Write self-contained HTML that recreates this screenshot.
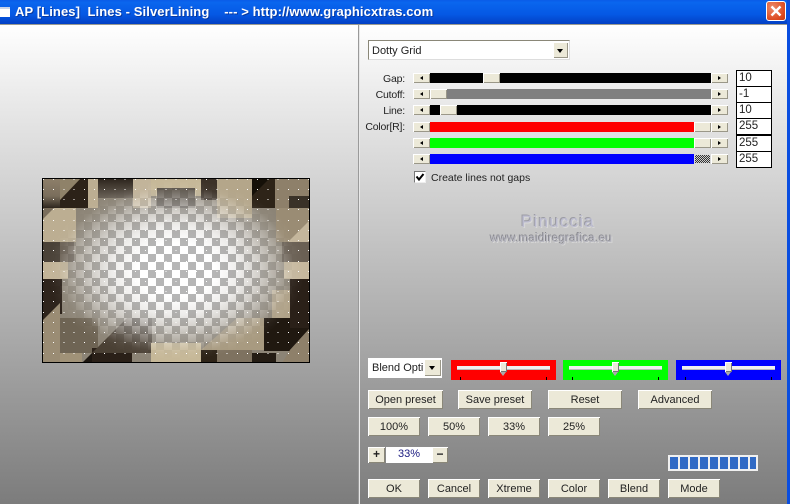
<!DOCTYPE html>
<html><head><meta charset="utf-8"><style>
html,body{margin:0;padding:0}
body{width:790px;height:504px;overflow:hidden;position:relative;font-family:"Liberation Sans",sans-serif;font-size:11px;color:#000}
div,span{position:absolute;box-sizing:border-box}
#bg{left:0;top:24px;width:787px;height:480px;background:linear-gradient(#fff 0,#eee 60px,#c8c8c8 200px,#a2a2a2 340px,#7c7c7c 480px)}
#title{left:0;top:0;width:790px;height:24px;background:linear-gradient(#0a5ce8 0,#0a66ee 10%,#0558e4 60%,#0340c4 100%)}
.b{background:#ece9d8;box-shadow:inset 1px 1px 0 #fff,inset -1px -1px 0 #8a8778;text-align:center;font-size:11px;line-height:20px;color:#222}
.s{background:#ece9d8;box-shadow:inset 1px 1px 0 #fff,inset -1px -1px 0 #9a9788}
.t{height:10px;left:430px;width:281px}
.ar{width:17px;height:10px;font-size:0}
.ar i{position:absolute;top:3px;left:7px;width:0;height:0;border:2px solid transparent;display:block}
.l i{border-right:3px solid #000;border-left:0}
.r i{border-left:3px solid #000;border-right:0}
.lb{right:385px;text-align:right;font-size:10.5px;letter-spacing:-.2px;color:#222;line-height:14px;white-space:nowrap}
.in{left:736px;width:36px;height:17px;background:#fff;border:1px solid #000;font-size:11.5px;line-height:14px;padding-left:2px;color:#222}
.pn{top:360px;height:20px;width:105px}
.tr{top:366px;height:3px;background:#f0f0f0;box-shadow:0 1px 0 #bbb}
.th{top:362px;width:7px;height:10px;background:#ece9d8;box-shadow:inset 1px 1px 0 #fff,inset -1px -1px 0 #777}
.th2{top:372px;width:0;height:0;border-left:3.5px solid transparent;border-right:3.5px solid transparent;border-top:4px solid #aaa}
.tk{top:377px;width:1px;height:3px;background:#000}
</style></head><body>
<div id="bg"></div>
<div id="title"></div>
<div style="left:0;top:7px;width:10px;height:10px;background:#fff;border-top:2px solid #c8d4e8"></div>
<div style="left:15px;top:3px;color:#fff;font-weight:bold;font-size:13px;letter-spacing:.1px;line-height:18px;white-space:pre;text-shadow:1px 1px 0 #0a3aa0">AP [Lines]  Lines - SilverLining    --- &gt; http://www.graphicxtras.com</div>
<div style="left:766px;top:1px;width:20px;height:20px;border-radius:3px;border:1px solid #fff;background:radial-gradient(circle at 30% 30%,#ec8a6a,#dd4a20 70%,#c83a10)"></div>
<svg style="position:absolute;left:766px;top:1px" width="20" height="20"><path d="M5.5 5.5L14.5 14.5M14.5 5.5L5.5 14.5" stroke="#fff" stroke-width="2.4"/></svg>
<div style="left:787px;top:0;width:3px;height:504px;background:#0a4ee0"></div>
<div style="left:0;top:24px;width:787px;height:1px;background:#9a9a90"></div>
<div style="left:358px;top:25px;width:1px;height:479px;background:#9a9a9a"></div>
<div style="left:359px;top:25px;width:1px;height:479px;background:#e8e8e8"></div>

<svg style="position:absolute;left:42px;top:178px" width="268" height="185" viewBox="0 0 268 185">
<defs>
<pattern id="ck" width="16" height="16" patternUnits="userSpaceOnUse" x="2" y="4"><rect width="16" height="16" fill="#fff"/><rect width="8" height="8" fill="#b6b6b6"/><rect x="8" y="8" width="8" height="8" fill="#b6b6b6"/></pattern>
<radialGradient id="rg" cx="134" cy="92" r="1" gradientUnits="userSpaceOnUse" gradientTransform="translate(134 92) scale(128 90) translate(-134 -92)">
<stop offset="0" stop-color="#fff" stop-opacity="0"/><stop offset=".3" stop-color="#fff" stop-opacity="0"/><stop offset=".5" stop-color="#fff" stop-opacity=".15"/><stop offset=".65" stop-color="#fff" stop-opacity=".38"/><stop offset=".8" stop-color="#fff" stop-opacity=".68"/><stop offset=".92" stop-color="#fff" stop-opacity=".95"/><stop offset="1" stop-color="#fff" stop-opacity="1"/></radialGradient>
<mask id="mk" maskUnits="userSpaceOnUse" x="0" y="0" width="268" height="185"><rect width="268" height="185" fill="url(#rg)"/></mask>
<linearGradient id="g1" x1="0" y1="0" x2="0" y2="1"><stop offset="0" stop-color="#8e806a"/><stop offset=".6" stop-color="#7a6e5c"/><stop offset="1" stop-color="#2e261e"/></linearGradient>
<linearGradient id="g2" x1="0" y1="0" x2="0" y2="1"><stop offset="0" stop-color="#2a221a"/><stop offset="1" stop-color="#6a6258"/></linearGradient>
</defs>
<rect width="268" height="185" fill="url(#ck)"/>
<g mask="url(#mk)">
<rect width="268" height="185" fill="#8c8476"/>
<rect x="0" y="0" width="18" height="30" fill="url(#g1)"/>
<rect x="18" y="0" width="28" height="30" fill="#2c2218"/>
<path d="M18 0H39L18 22Z" fill="#8f8269"/>
<rect x="46" y="0" width="10" height="30" fill="#bcae92"/>
<rect x="56" y="0" width="35" height="20" fill="url(#g2)"/>
<rect x="91" y="0" width="18" height="30" fill="#c2b49a"/>
<rect x="109" y="0" width="50" height="18" fill="#c6b898"/>
<rect x="115" y="10" width="38" height="20" fill="#5a5248"/>
<rect x="159" y="0" width="16" height="22" fill="#3c3228"/>
<rect x="175" y="0" width="35" height="40" fill="#b4a68a"/>
<rect x="210" y="0" width="23" height="30" fill="#2e2418"/>
<path d="M210 18L228 0H210Z" fill="#151008"/>
<rect x="233" y="0" width="35" height="30" fill="#8e806a"/>
<rect x="247" y="18" width="21" height="12" fill="#3a3228"/>
<rect x="0" y="30" width="34" height="34" fill="#bcae92"/>
<path d="M0 42L12 30H0Z" fill="#7a6e5c"/>
<rect x="234" y="30" width="34" height="34" fill="#9a8c74"/>
<path d="M268 42V64H246Z" fill="#c4b69c"/>
<rect x="0" y="64" width="18" height="20" fill="#4a4238"/>
<rect x="18" y="64" width="14" height="20" fill="#6a6054"/>
<rect x="240" y="64" width="28" height="20" fill="#6a6054"/>
<rect x="0" y="84" width="26" height="17" fill="#c2b498"/>
<rect x="242" y="84" width="26" height="17" fill="#c6b89e"/>
<rect x="0" y="101" width="20" height="35" fill="#2e241c"/>
<path d="M0 148L20 128V136H0Z" fill="#2e241c"/>
<rect x="248" y="101" width="20" height="50" fill="#2a2018"/>
<rect x="230" y="112" width="18" height="28" fill="#b0a288"/>
<path d="M0 143L18 125V185H0Z" fill="#9a8c74"/>
<rect x="18" y="140" width="38" height="35" fill="#6e6454"/>
<rect x="18" y="175" width="22" height="10" fill="#a09278"/>
<path d="M40 185L50 175V185Z" fill="#1c1610"/>
<rect x="50" y="170" width="40" height="15" fill="#2a2018"/>
<path d="M50 175L85 140H110V175Z" fill="#4a4034"/>
<rect x="109" y="165" width="50" height="20" fill="#c6b898"/>
<rect x="159" y="172" width="16" height="13" fill="#2e2418"/>
<path d="M159 172L195 140H222V172Z" fill="#a89a80"/>
<rect x="175" y="172" width="35" height="13" fill="#7e7260"/>
<rect x="210" y="175" width="24" height="10" fill="#241c14"/>
<rect x="222" y="140" width="26" height="33" fill="#201810"/>
<path d="M248 150H268L248 172Z" fill="#201810"/>
<path d="M268 150V185H240L248 172Z" fill="#8e806a"/>
</g>
<path shape-rendering="crispEdges" fill="none" stroke="#fff" stroke-width="1" stroke-dasharray="1 9.2" d="M1 1.5H268M1 11.5H268M1 21.5H268M1 31.5H268M1 42.5H268M1 52.5H268M1 62.5H268M1 72.5H268M1 83.5H268M1 93.5H268M1 103.5H268M1 113.5H268M1 123.5H268M1 134.5H268M1 144.5H268M1 154.5H268M1 164.5H268M1 175.5H268"/>
<rect x=".5" y=".5" width="267" height="184" fill="none" stroke="#000"/>
</svg>

<!-- combo -->
<div style="left:368px;top:40px;width:202px;height:20px;background:#fff;border:1px solid #8a8778;border-bottom-color:#ddd;border-right-color:#ddd;font-size:11px;line-height:21px;padding-left:3px;color:#222">Dotty Grid</div>
<div class="s" style="left:553px;top:42px;width:15px;height:16px"></div>
<div style="left:557px;top:49px;width:0;height:0;border:3.5px solid transparent;border-top:4px solid #000;border-bottom:0"></div>

<!-- labels -->
<div class="lb" style="top:72px">Gap:</div>
<div class="lb" style="top:88px">Cutoff:</div>
<div class="lb" style="top:104px">Line:</div>
<div class="lb" style="top:120px">Color[R]:</div>

<!-- sliders -->
<div class="s ar l" style="left:413px;top:73px"><i></i></div><div class="t" style="top:73px;background:#000"></div><div class="s" style="left:483px;top:73px;width:17px;height:10px"></div><div class="s ar r" style="left:711px;top:73px"><i></i></div>
<div class="s ar l" style="left:413px;top:89px"><i></i></div><div class="t" style="top:89px;background:#808080"></div><div class="s" style="left:430px;top:89px;width:17px;height:10px"></div><div class="s ar r" style="left:711px;top:89px"><i></i></div>
<div class="s ar l" style="left:413px;top:105px"><i></i></div><div class="t" style="top:105px;background:#000"></div><div class="s" style="left:440px;top:105px;width:17px;height:10px"></div><div class="s ar r" style="left:711px;top:105px"><i></i></div>
<div class="s ar l" style="left:413px;top:122px"><i></i></div><div class="t" style="top:122px;width:264px;background:#f00"></div><div class="s" style="left:694px;top:122px;width:17px;height:10px"></div><div class="s ar r" style="left:711px;top:122px"><i></i></div>
<div class="s ar l" style="left:413px;top:138px"><i></i></div><div class="t" style="top:138px;width:264px;background:#0f0"></div><div class="s" style="left:694px;top:138px;width:17px;height:10px"></div><div class="s ar r" style="left:711px;top:138px"><i></i></div>
<div class="s ar l" style="left:413px;top:154px"><i></i></div><div class="t" style="top:154px;width:264px;background:#00f"></div><div style="left:695px;top:155px;width:15px;height:8px;background:repeating-conic-gradient(#333 0 25%,#ccc 0 50%) 0 0/2px 2px"></div><div class="s ar r" style="left:711px;top:154px"><i></i></div>

<!-- inputs -->
<div class="in" style="top:70px">10</div>
<div class="in" style="top:86px">-1</div>
<div class="in" style="top:102px">10</div>
<div class="in" style="top:118px">255</div>
<div class="in" style="top:135px">255</div>
<div class="in" style="top:151px">255</div>

<!-- checkbox -->
<div style="left:414px;top:171px;width:12px;height:12px;background:#fff;border:1px solid #777;border-right-color:#eee;border-bottom-color:#eee"></div>
<svg style="position:absolute;left:414px;top:171px" width="12" height="12"><path d="M2.5 5.5L5 8.5L9.5 3" fill="none" stroke="#000" stroke-width="2"/></svg>
<div style="left:431px;top:171px;font-size:10.5px;line-height:14px;color:#222;white-space:nowrap">Create lines not gaps</div>

<!-- watermark -->
<div style="left:471px;top:212px;width:174px;text-align:center;font-size:17px;line-height:20px;letter-spacing:1.2px;color:#bcbcd0;text-shadow:-1px -1px 0 #9c9ca4,1px 1px 0 #d8d8d8">Pinuccia</div>
<div style="left:471px;top:232px;width:161px;text-align:center;font-size:11.5px;line-height:14px;letter-spacing:.3px;color:#b4b4be;text-shadow:-1px -1px 0 #85858c,1px 1px 0 #d8d8d8;white-space:nowrap">www.maidiregrafica.eu</div>

<!-- blend combo -->
<div style="left:368px;top:358px;width:74px;height:20px;background:#fff;font-size:11px;line-height:21px;padding-left:4px;overflow:hidden;white-space:nowrap;color:#222">Blend Opti</div>
<div class="s" style="left:424px;top:359px;width:17px;height:17px"></div>
<div style="left:429px;top:366px;width:0;height:0;border:3.5px solid transparent;border-top:4px solid #000;border-bottom:0"></div>

<!-- color sliders -->
<div class="pn" style="left:451px;background:#f00"></div>
<div class="tr" style="left:457px;width:93px"></div><div class="th" style="left:500px"></div><div class="th2" style="left:500px"></div><div class="tk" style="left:460px"></div><div class="tk" style="left:546px"></div>
<div class="pn" style="left:563px;background:#0f0"></div>
<div class="tr" style="left:569px;width:93px"></div><div class="th" style="left:612px"></div><div class="th2" style="left:612px"></div><div class="tk" style="left:572px"></div><div class="tk" style="left:658px"></div>
<div class="pn" style="left:676px;background:#00f"></div>
<div class="tr" style="left:682px;width:93px"></div><div class="th" style="left:725px"></div><div class="th2" style="left:725px"></div><div class="tk" style="left:685px"></div><div class="tk" style="left:771px"></div>

<!-- buttons -->
<div class="b" style="left:368px;top:390px;width:75px;height:19px">Open preset</div>
<div class="b" style="left:458px;top:390px;width:74px;height:19px">Save preset</div>
<div class="b" style="left:548px;top:390px;width:74px;height:19px">Reset</div>
<div class="b" style="left:638px;top:390px;width:74px;height:19px">Advanced</div>
<div class="b" style="left:368px;top:417px;width:52px;height:19px">100%</div>
<div class="b" style="left:428px;top:417px;width:52px;height:19px">50%</div>
<div class="b" style="left:488px;top:417px;width:52px;height:19px">33%</div>
<div class="b" style="left:548px;top:417px;width:52px;height:19px">25%</div>
<div class="b" style="left:368px;top:447px;width:17px;height:16px;line-height:15px;font-weight:bold;font-size:12px">+</div>
<div style="left:386px;top:447px;width:46px;height:16px;background:#fff;color:#1a1a80;text-align:center;font-size:11px;line-height:15px">33%</div>
<div class="b" style="left:432px;top:447px;width:16px;height:16px;line-height:15px;font-weight:bold;font-size:12px">&minus;</div>

<!-- progress -->
<div style="left:668px;top:455px;width:90px;height:16px;background:#f0f0f0"></div>
<div style="left:670px;top:457px;width:8px;height:12px;background:#316ac5"></div>
<div style="left:680px;top:457px;width:8px;height:12px;background:#316ac5"></div>
<div style="left:690px;top:457px;width:8px;height:12px;background:#316ac5"></div>
<div style="left:700px;top:457px;width:8px;height:12px;background:#316ac5"></div>
<div style="left:710px;top:457px;width:8px;height:12px;background:#316ac5"></div>
<div style="left:720px;top:457px;width:8px;height:12px;background:#316ac5"></div>
<div style="left:730px;top:457px;width:8px;height:12px;background:#316ac5"></div>
<div style="left:740px;top:457px;width:8px;height:12px;background:#316ac5"></div>
<div style="left:750px;top:457px;width:6px;height:12px;background:#316ac5"></div>

<div class="b" style="left:368px;top:479px;width:52px;height:19px">OK</div>
<div class="b" style="left:428px;top:479px;width:52px;height:19px">Cancel</div>
<div class="b" style="left:488px;top:479px;width:52px;height:19px">Xtreme</div>
<div class="b" style="left:548px;top:479px;width:52px;height:19px">Color</div>
<div class="b" style="left:608px;top:479px;width:52px;height:19px">Blend</div>
<div class="b" style="left:668px;top:479px;width:52px;height:19px">Mode</div>
</body></html>
